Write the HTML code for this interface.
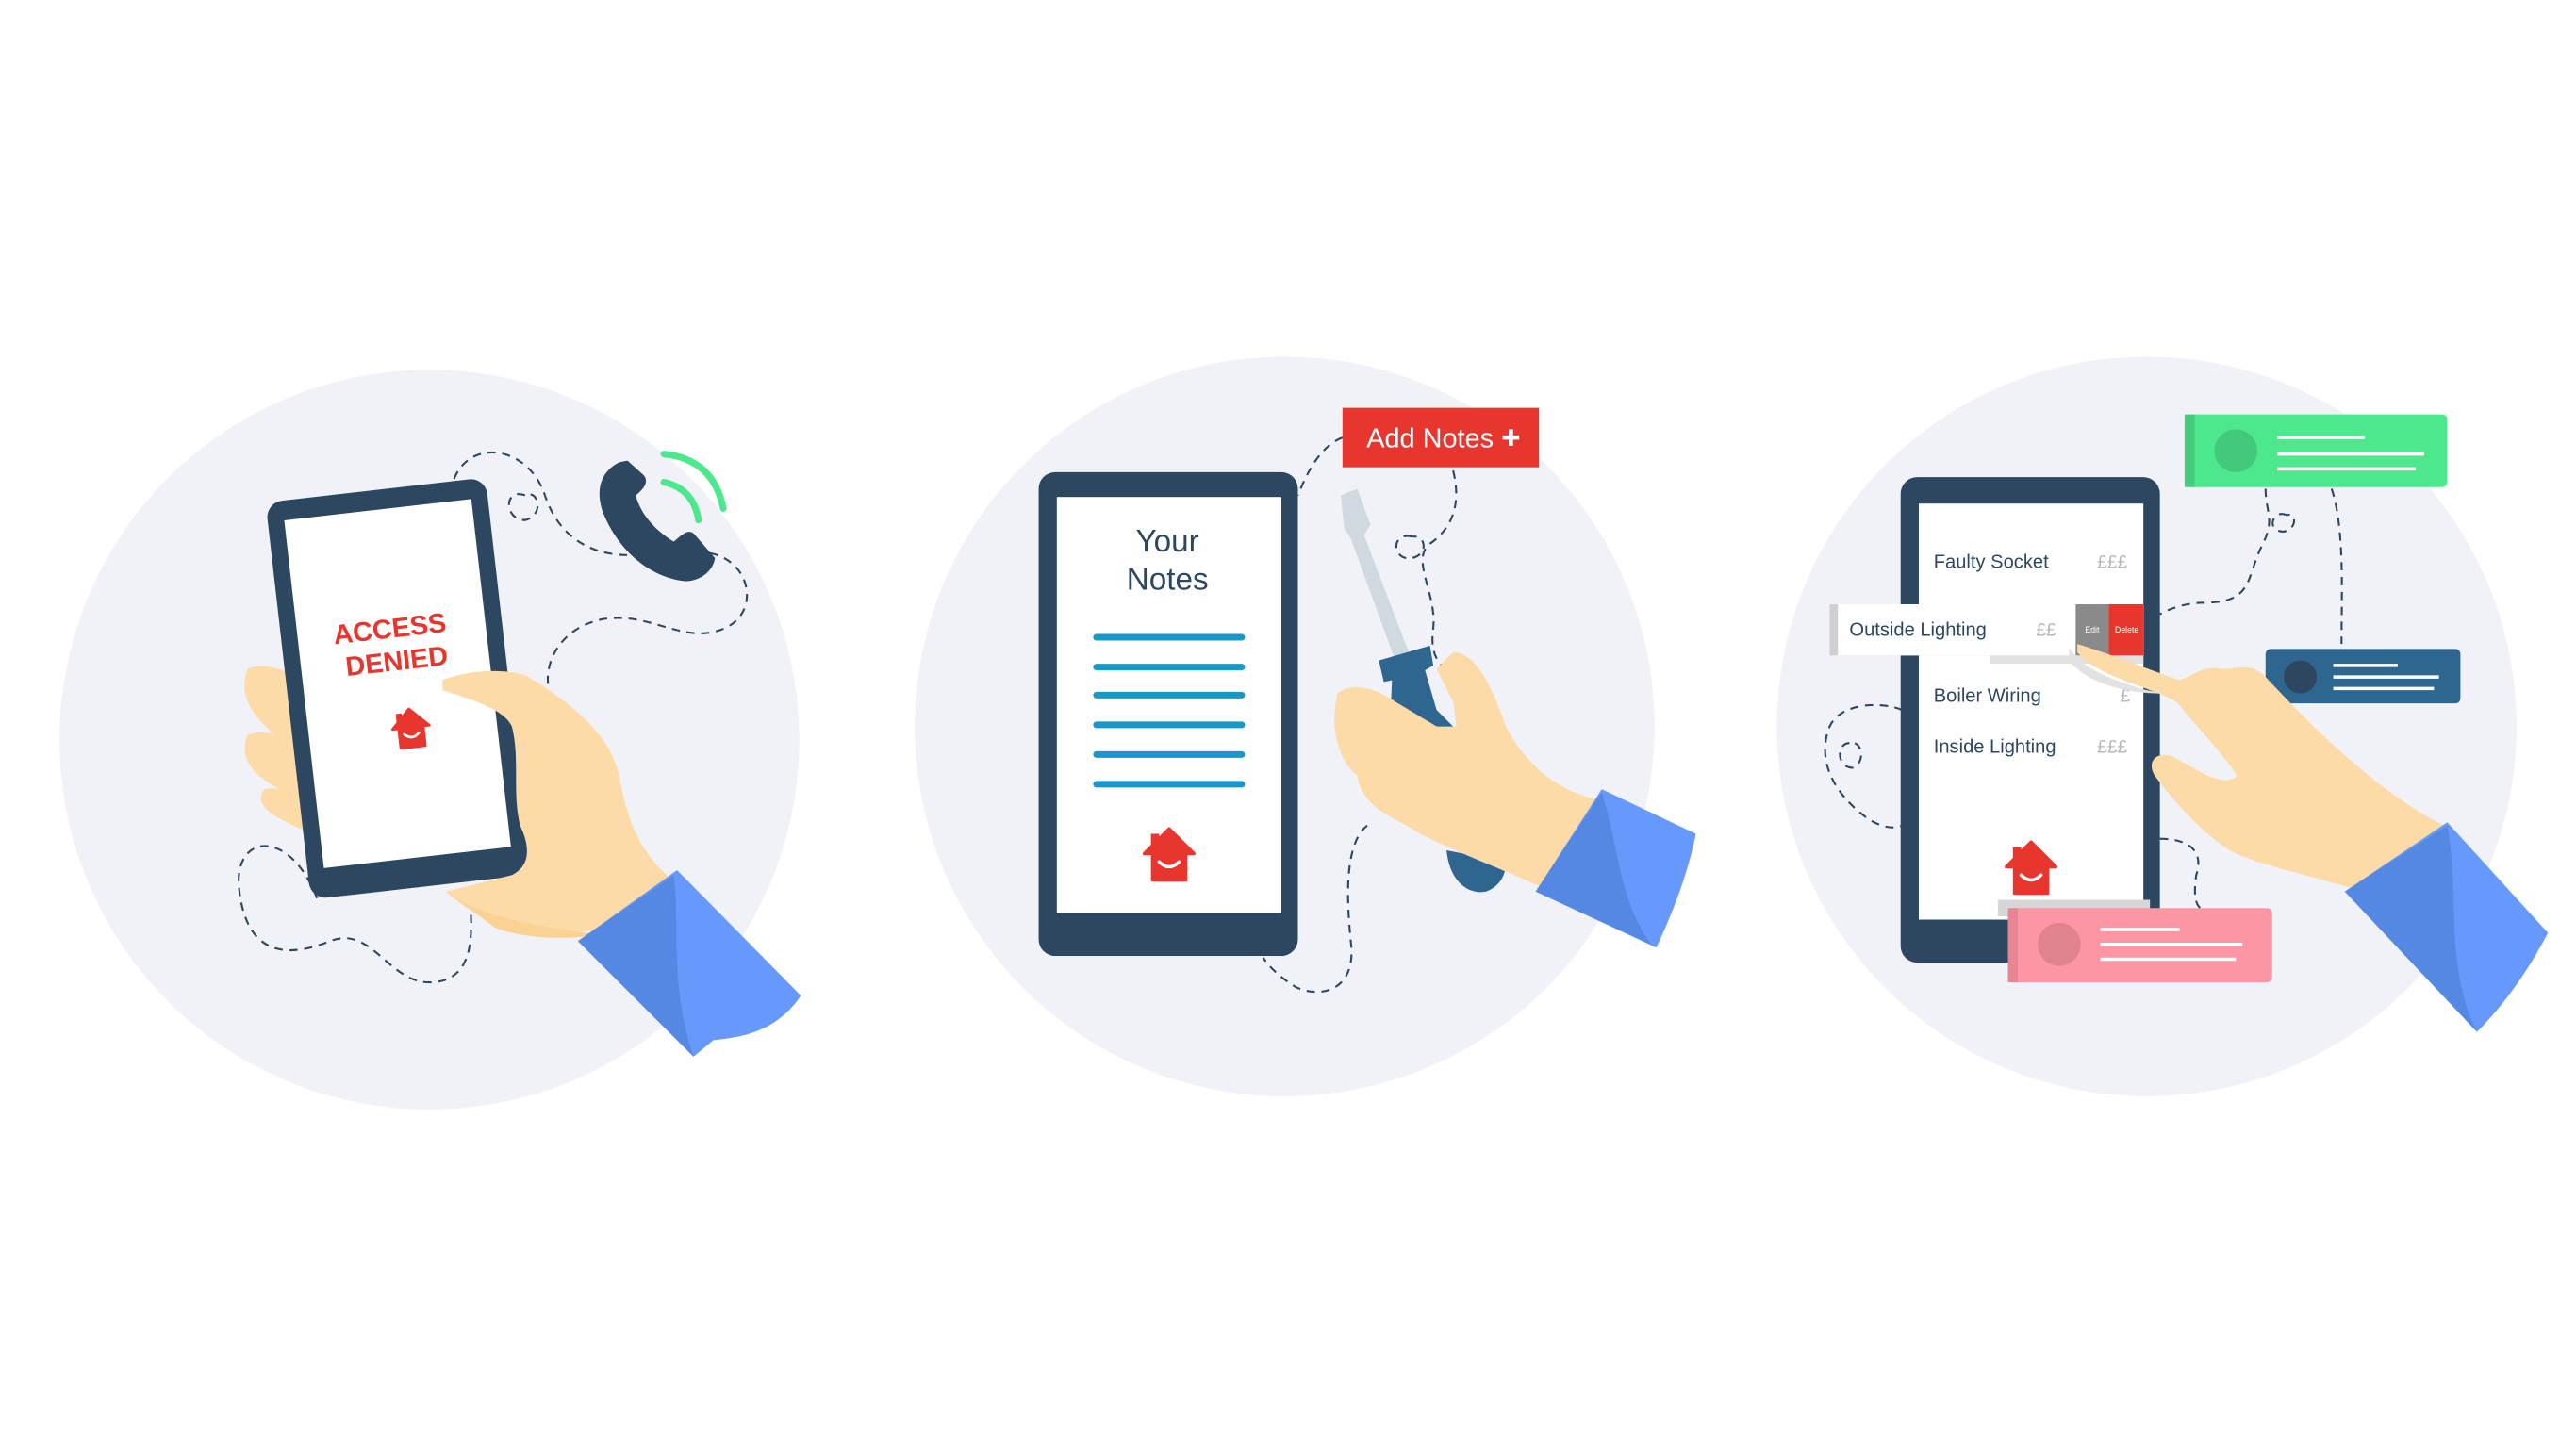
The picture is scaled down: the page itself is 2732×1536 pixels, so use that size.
<!DOCTYPE html>
<html><head><meta charset="utf-8"><style>
html,body{margin:0;padding:0;background:#fff;}
svg{display:block;}
text{font-family:"Liberation Sans",sans-serif;}
</style></head><body>
<svg width="2732" height="1536" viewBox="0 0 1560 877" xmlns="http://www.w3.org/2000/svg">
<defs>
<g id="house">
<rect x="-11" y="-13" width="5" height="10" fill="#e8352e"/>
<path d="M0,-16 L15,-1 L12,-1 L10,-1 L10,15 L-10,15 L-10,-1 L-15,-1 Z" fill="#e8352e" stroke="#e8352e" stroke-width="2" stroke-linejoin="round"/>
<path d="M-6,4 Q0,10 6,4" fill="none" stroke="#fff" stroke-width="2" stroke-linecap="round"/>
</g>
</defs>
<rect width="1560" height="877" fill="#fff"/>
<circle cx="260" cy="448" r="224" fill="#f1f2f7"/>
<circle cx="778" cy="440" r="224" fill="#f1f2f7"/>
<circle cx="1300" cy="440" r="224" fill="#f1f2f7"/>

<!-- ===== Panel 1 ===== -->
<g fill="none" stroke="#2e4760" stroke-width="1.2" stroke-dasharray="5,4">
<path d="M275,290 C285,265 320,270 330,300 C340,330 365,340 395,335"/>
<path d="M318,300 C305,295 305,315 318,315 C330,312 326,296 318,300"/>
<path d="M430,335 C455,340 460,370 440,380 C415,392 395,370 365,375 C340,380 330,400 332,415"/>
<path d="M192,544 C175,500 140,505 145,540 C150,580 175,580 200,570 C225,560 235,595 260,595 C290,595 285,560 285,548"/>
</g>
<!-- phone icon -->
<path d="M375,280 C365,285 360,295 365,310 C375,335 395,350 415,352 C425,352 432,345 433,338 L420,323 C416,320 412,325 408,328 C398,322 388,312 385,300 C390,296 393,292 390,288 L380,279 Z" fill="#2e4760"/>
<path d="M402,292 Q420,296 423,315" fill="none" stroke="#4de88e" stroke-width="4" stroke-linecap="round"/>
<path d="M402,275 Q432,278 438,308" fill="none" stroke="#4de88e" stroke-width="4" stroke-linecap="round"/>
<!-- back fingers -->
<g fill="#fddba8">
<path d="M180,372 C170,370 168,385 180,400 L190,405 Z"/>
<path d="M150,405 C160,400 185,408 190,420 L192,460 C170,450 140,430 150,405 Z"/>
<path d="M150,445 C165,440 185,450 193,460 L195,490 C175,480 140,470 150,445 Z"/>
<path d="M160,478 C175,475 190,485 198,490 L200,510 C180,500 150,492 160,478 Z"/>
</g>
<!-- phone 1 -->
<g transform="rotate(-6.5 241 416)">
<rect x="174" y="296" width="134" height="242" rx="10" fill="#2e4760"/>
<rect x="184" y="308" width="114" height="212" fill="#fff"/>
<text x="240" y="386" text-anchor="middle" font-size="16.5" font-weight="bold" fill="#e8352e">ACCESS</text>
<text x="242" y="406" text-anchor="middle" font-size="16.5" font-weight="bold" fill="#e8352e">DENIED</text>
<use href="#house" transform="translate(246,442) scale(0.75)"/>
</g>
<!-- front hand 1 -->
<path d="M268,412 C285,405 310,405 320,410 C345,425 370,445 375,470 C380,500 390,520 410,535 L380,565 C360,560 340,570 300,560 C290,555 275,545 270,540 L310,530 C320,525 322,515 315,500 C310,480 315,460 310,440 C305,430 290,425 268,418 Z" fill="#fddba8"/>
<path d="M270,540 C290,555 320,560 355,565 L378,562 C360,570 320,570 300,562 Z" fill="#f9d294"/>
<path d="M350,570 L410,527 L485,603 C470,625 450,628 432,630 L420,640 Z" fill="#6799fc"/>
<path d="M350,570 L408,530 C412,560 405,595 420,640 Z" fill="#5588e3"/>

<!-- ===== Panel 2 ===== -->
<g fill="none" stroke="#2e4760" stroke-width="1.2" stroke-dasharray="5,4">
<path d="M813,265 C800,270 792,285 786,300"/>
<path d="M880,285 C885,305 880,320 865,330 C855,340 870,360 868,380 C866,395 870,400 875,405"/>
<path d="M855,325 C842,322 843,340 855,338 C865,336 864,324 855,325"/>
<path d="M828,500 C815,510 815,540 818,570 C822,600 800,605 785,598 C775,592 768,585 765,580"/>
</g>
<rect x="813" y="247" width="119" height="36" fill="#e8352e"/>
<text x="866" y="271" text-anchor="middle" font-size="16.5" fill="#fff">Add Notes</text>
<path d="M910,265 h10 M915,260 v10" stroke="#fff" stroke-width="2.6"/>
<rect x="629" y="286" width="157" height="293" rx="10" fill="#2e4760"/>
<rect x="640" y="301" width="136" height="252" fill="#fff"/>
<text x="707" y="334" text-anchor="middle" font-size="19" fill="#2e4760">Your</text>
<text x="707" y="357" text-anchor="middle" font-size="19" fill="#2e4760">Notes</text>
<g stroke="#1a97c9" stroke-width="4" stroke-linecap="round">
<path d="M664,386 H752 M664,404 H752 M664,421 H752 M664,439 H752 M664,457 H752 M664,475 H752"/>
</g>
<use href="#house" transform="translate(708,518)"/>
<!-- screwdriver -->
<path d="M812,300 L822,296 L830,318 L826,324 L855,400 L846,403 L818,326 L814,320 Z" fill="#d1d9e0"/>
<path d="M876,515 C878,535 890,542 900,540 C910,536 912,528 912,522 Z" fill="#2f6690"/>
<path d="M835,400 L866,391 L868,403 L863,406 L870,430 L880,440 L860,445 L842,433 L843,412 L838,413 Z" fill="#2f6690"/>
<!-- hand 2 -->
<path d="M810,420 C820,412 835,418 845,425 L870,440 L882,440 L880,425 L870,405 L880,395 C895,395 905,420 912,440 C925,465 945,480 970,485 L975,530 L950,545 C920,530 890,520 860,505 C845,495 825,490 822,470 C810,460 805,440 810,420 Z" fill="#fddba8"/>
<path d="M930,540 L970,478 L1027,505 C1022,530 1012,555 1003,574 Z" fill="#6799fc"/>
<path d="M930,540 L970,480 C980,510 980,545 1000,572 Z" fill="#5588e3"/>

<!-- ===== Panel 3 ===== -->
<g fill="none" stroke="#2e4760" stroke-width="1.2" stroke-dasharray="5,4">
<path d="M1372,296 C1372,310 1378,315 1370,330 C1360,350 1365,365 1335,365 C1325,365 1315,368 1308,372"/>
<path d="M1385,312 C1376,308 1372,322 1383,322 C1392,320 1390,310 1385,312"/>
<path d="M1412,296 C1420,320 1418,360 1418,390"/>
<path d="M1152,430 C1140,425 1115,425 1108,440 C1100,460 1110,480 1130,495 C1140,502 1148,502 1152,500"/>
<path d="M1120,450 C1112,450 1112,465 1122,465 C1130,462 1128,448 1120,450"/>
<path d="M1308,508 C1325,508 1335,515 1330,530 C1328,545 1330,550 1336,552"/>
</g>
<rect x="1151" y="289" width="157" height="294" rx="10" fill="#2e4760"/>
<rect x="1162" y="305" width="136" height="252" fill="#fff"/>
<g font-size="11.5" fill="#2e4760">
<text x="1171" y="344">Faulty Socket</text>
<text x="1171" y="425">Boiler Wiring</text>
<text x="1171" y="456">Inside Lighting</text>
</g>
<g font-size="11" fill="#b8b8b8">
<text x="1270" y="344">£££</text>
<text x="1284" y="425">£</text>
<text x="1270" y="456">£££</text>
</g>
<rect x="1205" y="397" width="93" height="5" fill="#e2e2e2"/>
<rect x="1108" y="366" width="190" height="31" fill="#d0d0d0"/>
<rect x="1113" y="366" width="185" height="31" fill="#fff"/>
<text x="1120" y="385" font-size="11.5" fill="#2e4760">Outside Lighting</text>
<text x="1233" y="385" font-size="11" fill="#b8b8b8">££</text>
<rect x="1257" y="366" width="20" height="31" fill="#8a8a8a"/>
<rect x="1277" y="366" width="21" height="31" fill="#e8352e"/>
<text x="1267" y="383" text-anchor="middle" font-size="5" fill="#fff">Edit</text>
<text x="1288" y="383" text-anchor="middle" font-size="5" fill="#fff">Delete</text>
<use href="#house" transform="translate(1230,526)"/>
<rect x="1210" y="545" width="92" height="10" fill="#d6d6d6"/>
<rect x="1216" y="550" width="160" height="45" rx="3" fill="#fc96a4"/>
<rect x="1216" y="550" width="6" height="45" fill="#e88593"/>
<circle cx="1247" cy="572" r="13" fill="#e0828f"/>
<path d="M1272,563 H1320 M1272,572 H1358 M1272,581 H1354" stroke="#fff" stroke-width="2"/>
<rect x="1323" y="251" width="159" height="44" rx="3" fill="#4de88e"/>
<rect x="1323" y="251" width="6" height="44" fill="#44cc7e"/>
<circle cx="1354" cy="273" r="13" fill="#42c97b"/>
<path d="M1379,265 H1432 M1379,275 H1468 M1379,284 H1463" stroke="#fff" stroke-width="2"/>
<rect x="1372" y="393" width="118" height="33" rx="3" fill="#2f6690"/>
<circle cx="1393" cy="410" r="10" fill="#2e4760"/>
<path d="M1413,403 H1452 M1413,410 H1477 M1413,417 H1474" stroke="#fff" stroke-width="2"/>
<!-- hand 3 -->
<path d="M1258,390 C1275,395 1300,405 1320,412 C1330,408 1335,403 1345,405 C1355,406 1362,400 1372,410 C1400,440 1440,480 1480,500 L1470,545 L1430,540 C1400,530 1370,525 1350,515 C1335,505 1320,490 1305,470 C1300,462 1305,455 1315,458 C1330,465 1345,478 1355,470 C1345,455 1330,440 1318,425 C1300,415 1270,410 1258,395 Z" fill="#fddba8"/>
<path d="M1253,392 C1260,405 1280,412 1300,418 L1310,420 C1290,420 1265,415 1253,400 Z" fill="#e2e2e2"/>
<path d="M1420,540 L1482,498 L1543,565 C1530,590 1515,610 1500,625 Z" fill="#6799fc"/>
<path d="M1420,540 L1482,500 C1490,540 1480,585 1500,625 Z" fill="#5588e3"/>
</svg>
</body></html>
